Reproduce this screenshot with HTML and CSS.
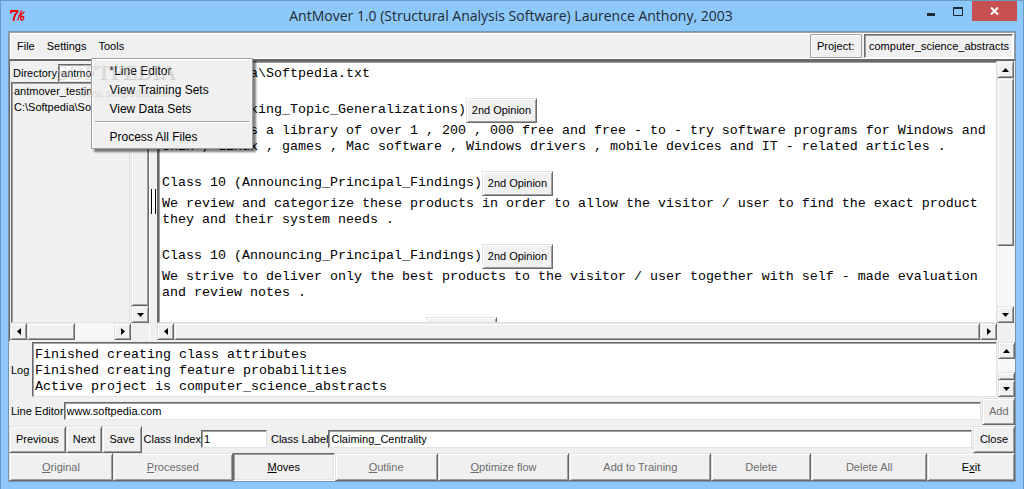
FILE: index.html
```html
<!doctype html>
<html lang="en">
  <head>
    <meta charset="UTF-8" />
    <meta name="viewport" content="width=device-width, initial-scale=1.0" />
    <title>AntMover 1.0</title>
    <link rel="stylesheet" href="styles.css">
  </head>
  <body>
    <header class="titlebar">
      <svg class="app-icon" width="16" height="14" viewBox="0 0 16 14" fill="none" stroke="#f00000" stroke-width="1.2">
        <path d="M1 4.500V2H8.500M8 2Q4 6 3.500 12" stroke-width="1.8" />
        <path d="M11.500 1.500L7.500 11.500M14.500 2.500Q11 5 10.500 8.500Q10.500 12 12.500 11Q14.500 9.500 13.500 7.500Q12 7 10.500 9.500M8.500 7L13 4" />
      </svg>
      <h1>AntMover 1.0 (Structural Analysis Software) Laurence Anthony, 2003</h1>
      <div class="window-buttons">
        <button type="button" aria-label="Minimize"><svg width="11" height="11" viewBox="0 0 11 11"><path d="M1 8.500H9" stroke="#1e2a35" stroke-width="3" /></svg></button>
        <button type="button" aria-label="Maximize"><svg width="11" height="11" viewBox="0 0 11 11"><path d="M.5 1.500H9.500V9.500H.5Z" fill="none" stroke="#1e2a35" /><path d="M0 2H10" stroke="#1e2a35" stroke-width="2" /></svg></button>
        <button type="button" class="close" aria-label="Close window"><svg width="9" height="8" viewBox="0 0 9 8"><path d="M1 .5L8 7.500M8 .5L1 7.500" stroke="#fff" stroke-width="2" /></svg></button>
      </div>
    </header>

    <main class="client">
      <nav class="menubar">
        <button type="button">File</button>
        <button type="button">Settings</button>
        <div class="menu-open">
          <button type="button">Tools</button>
          <div class="popup">
            <button type="button">*Line Editor</button>
            <button type="button">View Training Sets</button>
            <button type="button">View Data Sets</button>
            <hr />
            <button type="button">Process All Files</button>
          </div>
        </div>
        <span class="project-label">Project:</span>
        <span class="project-name">computer_science_abstracts</span>
      </nav>

      <div class="workspace">
        <div class="files">
          <div class="directory">
            <label for="directory">Directory</label>
            <input type="text" id="directory" value="antmover_testing" />
          </div>
          <select class="file-list" size="8" aria-label="Files">
            <option>antmover_testing</option>
            <option>C:\Softpedia\Softpedia.txt</option>
          </select>
          <div class="scroll vertical">
            <span class="arrow"><svg width="7" height="4"><path d="M0 4L3.500 0L7 4Z" /></svg></span>
            <span class="thumb grow"></span>
            <span class="arrow"><svg width="7" height="4"><path d="M0 0H7L3.500 4Z" /></svg></span>
          </div>
          <div class="scroll horizontal">
            <span class="arrow"><svg width="4" height="7"><path d="M4 0V7L0 3.500Z" /></svg></span>
            <span class="thumb file-thumb"></span>
            <span class="space"></span>
            <span class="arrow"><svg width="4" height="7"><path d="M0 0L4 3.500L0 7Z" /></svg></span>
          </div>
        </div>

        <div class="sash"><span></span></div>

        <div class="results">
          <div class="output">
            <p>C:\Softpedia\Softpedia.txt</p>
            <div class="class-row">Class 2 (Making_Topic_Generalizations)<button type="button" class="raised">2nd Opinion</button></div>
            <p>Softpedia is a library of over 1 , 200 , 000 free and free - to - try software programs for Windows and<br />Unix , Linux , games , Mac software , Windows drivers , mobile devices and IT - related articles .</p>
            <div class="class-row">Class 10 (Announcing_Principal_Findings)<button type="button" class="raised">2nd Opinion</button></div>
            <p>We review and categorize these products in order to allow the visitor / user to find the exact product<br />they and their system needs .</p>
            <div class="class-row">Class 10 (Announcing_Principal_Findings)<button type="button" class="raised">2nd Opinion</button></div>
            <p>We strive to deliver only the best products to the visitor / user together with self - made evaluation<br />and review notes .</p>
            <div class="class-row next-class"><button type="button" class="raised" aria-label="2nd Opinion"></button></div>
          </div>
          <div class="scroll vertical">
            <span class="arrow"><svg width="7" height="4"><path d="M0 4L3.500 0L7 4Z" /></svg></span>
            <span class="thumb output-thumb"></span>
            <span class="space"></span>
            <span class="arrow"><svg width="7" height="4"><path d="M0 0H7L3.500 4Z" /></svg></span>
          </div>
          <div class="scroll horizontal">
            <span class="arrow"><svg width="4" height="7"><path d="M4 0V7L0 3.500Z" /></svg></span>
            <span class="thumb grow"></span>
            <span class="arrow"><svg width="4" height="7"><path d="M0 0L4 3.500L0 7Z" /></svg></span>
          </div>
        </div>
      </div>

      <div class="log">
        <label for="log">Log</label>
        <textarea id="log" rows="3" readonly>Finished creating class attributes
Finished creating feature probabilities
Active project is computer_science_abstracts</textarea>
        <div class="scroll vertical">
          <span class="arrow"><svg width="7" height="4"><path d="M0 4L3.500 0L7 4Z" /></svg></span>
          <span class="space"></span>
          <span class="thumb log-thumb"></span>
          <span class="arrow"><svg width="7" height="4"><path d="M0 0H7L3.500 4Z" /></svg></span>
        </div>
      </div>

      <div class="row line-editor">
        <label for="line">Line Editor</label>
        <input type="text" id="line" class="wide" value="www.softpedia.com" />
        <button type="button" class="raised" disabled>Add</button>
      </div>

      <div class="row class-editor">
        <button type="button" class="raised">Previous</button>
        <button type="button" class="raised">Next</button>
        <button type="button" class="raised">Save</button>
        <label for="index">Class Index</label>
        <input type="text" id="index" class="index" value="1" />
        <label for="label">Class Label</label>
        <input type="text" id="label" class="wide" value="Claiming_Centrality" />
        <button type="button" class="raised">Close</button>
      </div>

      <div class="actions">
        <button type="button" class="raised" disabled><u>O</u>riginal</button>
        <button type="button" class="raised" disabled><u>P</u>rocessed</button>
        <button type="button" class="raised pressed"><u>M</u>oves</button>
        <button type="button" class="raised" disabled><u>O</u>utline</button>
        <button type="button" class="raised" disabled><u>O</u>ptimize flow</button>
        <button type="button" class="raised" disabled>Add to Training</button>
        <button type="button" class="raised" disabled>Delete</button>
        <button type="button" class="raised" disabled>Delete All</button>
        <button type="button" class="raised">E<u>x</u>it</button>
      </div>

      <div class="watermark" aria-hidden="true">
        <b>SOFTPEDIA</b>
        <span>www.softpedia.com</span>
      </div>
    </main>
  </body>
</html>
```
FILE: styles.css
```css
* {
  box-sizing: border-box;
}

body {
  display: flex;
  flex-direction: column;
  min-height: 100vh;
  margin: 0;
  padding: 0 7px 7px;
  border: 1px solid #6b9ac6;
  background-color: #8dc8fa;
  font-family: "Liberation Sans", Arial, sans-serif;
  font-size: 11px;
  color: #000;
}

button,
input,
select,
textarea {
  margin: 0;
  border-radius: 0;
  font: inherit;
  color: inherit;
}

/* Title bar */
.titlebar {
  display: flex;
  position: relative;
  height: 30px;
}

.app-icon {
  margin: 8px 0 0 2px;
}

.titlebar h1 {
  flex: 1;
  margin: 0;
  padding-left: 78px;
  font-family: "Open Sans", "Segoe UI", sans-serif;
  font-size: 14px;
  font-weight: 400;
  line-height: 30px;
  text-align: center;
  color: #1e2a35;
}

.window-buttons {
  display: flex;
  margin-right: -1px;
}

.window-buttons button {
  width: 27px;
  height: 20px;
  padding: 2px 0 0;
  border: none;
  background: none;
}

.window-buttons .close {
  width: 45px;
  padding: 0;
  background-color: #c75050;
}

/* Client area */
.client {
  display: flex;
  flex: 1;
  flex-direction: column;
  position: relative;
  border: 1px solid #7396b5;
  background-color: #f0f0f0;
}

.menubar {
  display: flex;
  height: 28px;
  padding-left: 1px;
  border: 1px solid #a0a0a0;
  border-bottom-color: #696969;
  box-shadow: inset 1px 1px #fff, inset -1px -1px #fff;
}

.menubar button {
  padding: 0 6px;
  border: none;
  background: none;
}

.menu-open {
  display: flex;
  position: relative;
}

.popup {
  position: absolute;
  z-index: 2;
  top: 25px;
  left: -1px;
  width: 162px;
  padding: 2px;
  border: 1px solid #a0a0a0;
  background-color: #f0f0f0;
  box-shadow: inset 1px 1px #fff, 3px 3px 2px rgba(0, 0, 0, 0.5);
}

.popup button {
  display: block;
  width: 100%;
  height: 19px;
  padding: 0 15px;
  font-size: 12px;
  text-align: left;
}

.popup hr {
  height: 2px;
  margin: 3px 1px 4px;
  border: none;
  border-top: 1px solid #a0a0a0;
  border-bottom: 1px solid #fff;
}

.project-label,
.project-name {
  margin: 1px 0;
  padding: 0 6px;
  border: 1px solid #a0a0a0;
  line-height: 22px;
  box-shadow: inset 1px 1px #fff;
}

.project-label {
  width: 52px;
  margin-left: auto;
}

.project-name {
  width: 149px;
  margin: 1px 1px 1px 2px;
  padding: 0 4px;
  border-color: #696969 #fff #fff #696969;
  box-shadow: inset 1px 1px #a0a0a0;
}

/* Sunken and raised boxes */
input,
textarea,
.file-list,
.output {
  border: 1px solid;
  border-color: #696969 #e3e3e3 #e3e3e3 #696969;
  background-color: #fff;
  box-shadow: inset 1px 1px #a0a0a0;
}

input {
  min-width: 0;
  height: 18px;
  padding: 0 2px;
}

.raised,
.thumb,
.arrow {
  border: 1px solid;
  border-color: #e3e3e3 #696969 #696969 #e3e3e3;
  background-color: #f0f0f0;
  box-shadow: inset 1px 1px #fff, inset -1px -1px #a0a0a0;
}

.raised:disabled {
  color: #6d6d6d;
}

.raised.pressed {
  border-color: #696969 #fff #fff #696969;
  box-shadow: inset 1px 1px #a0a0a0, inset -1px -1px #e3e3e3;
}

/* Panes */
.workspace {
  display: grid;
  flex: 1;
  grid-template-columns: 140px 8px minmax(0, 1fr);
  border-top: 1px solid #696969;
}

.files {
  display: grid;
  grid-template-columns: 121px 18px;
  grid-template-rows: 21px 1fr 18px;
  border-left: 1px solid #696969;
}

.directory {
  display: flex;
  grid-column: 1 / 3;
  align-items: center;
  padding: 2px 2px 0 3px;
}

.directory input {
  flex: 1;
  margin-left: 1px;
}

.file-list {
  width: 119px;
  height: 100%;
  margin-left: 1px;
  padding: 1px 0;
  background-color: #f0f0f0;
  overflow: hidden;
}

.file-list option {
  min-height: 16px;
  padding: 1px 2px;
}

.scroll {
  display: flex;
  background: repeating-conic-gradient(#fff 0 25%, #f0f0f0 0 50%) 0 0 / 2px 2px;
}

.vertical {
  flex-direction: column;
}

.arrow {
  display: flex;
  flex: 0 0 17px;
  align-items: center;
  justify-content: center;
}

.horizontal {
  height: 17px;
}

.grow,
.space {
  flex: 1;
}

.file-thumb {
  flex: 0 0 48px;
}

.output-thumb {
  flex: 0 0 168px;
}

.log-thumb {
  flex: 0 0 8px;
}

.sash {
  display: flex;
  align-items: center;
  justify-content: center;
  border-left: 1px solid #fff;
}

.sash span {
  width: 5px;
  height: 25px;
  border: solid #000;
  border-width: 0 1px;
  box-shadow: inset 1px 0 #fff, inset -1px 0 #fff;
}

.results {
  display: grid;
  grid-template-columns: minmax(0, 1fr) 17px;
  grid-template-rows: 1fr 18px;
  padding-right: 1px;
}

.output {
  height: 262px;
  min-height: 100%;
  padding: 4px 3px;
  border-left-width: 2px;
  overflow: hidden;
  white-space: nowrap;
}

.output,
textarea {
  font-family: "Liberation Mono", "Courier New", monospace;
  font-size: 10pt;
  line-height: 16px;
}

.output p {
  margin: 0 0 15px;
}

.class-row {
  display: flex;
  align-items: center;
  height: 26px;
}

.class-row button {
  width: 71px;
  height: 25px;
  padding: 0;
  font-family: "Liberation Sans", Arial, sans-serif;
  font-size: 11px;
}

.next-class {
  padding-left: 264px;
}

/* Log and editors */
.log {
  display: flex;
  height: 55px;
  margin-top: 1px;
}

.log label {
  align-self: center;
  width: 23px;
  padding-left: 2px;
}

.log textarea {
  flex: 1;
  padding: 4px 2px 0;
  overflow: hidden;
  resize: none;
}

.log .scroll {
  width: 17px;
  margin-left: 1px;
}

.row {
  display: flex;
  align-items: center;
  height: 28px;
}

.row label {
  padding: 0 0 0 2px;
  white-space: nowrap;
}

.row .wide {
  flex: 1;
  margin-right: 1px;
}

.row .raised {
  height: 27px;
  padding: 0 6px;
}

.line-editor .raised {
  width: 33px;
}

.index {
  width: 66px;
  margin-right: 2px;
}

/* Bottom buttons */
.actions {
  display: grid;
  grid-template-columns: 104fr 120fr 102fr 103fr 132fr 142fr 100fr 116fr 88fr;
  height: 28px;
}

.actions .raised {
  padding: 0;
}

/* Site mark */
.watermark {
  display: flex;
  flex-direction: column;
  align-items: center;
  position: absolute;
  z-index: 3;
  top: 28px;
  left: 46px;
  width: 120px;
  color: rgba(255, 255, 255, 0.3);
  text-shadow: 1px 1px 1px rgba(0, 0, 0, 0.15);
  pointer-events: none;
}

.watermark b {
  font-family: "Liberation Serif", serif;
  font-size: 21px;
  line-height: 24px;
}

.watermark span {
  padding-left: 20px;
  line-height: 16px;
}
```
